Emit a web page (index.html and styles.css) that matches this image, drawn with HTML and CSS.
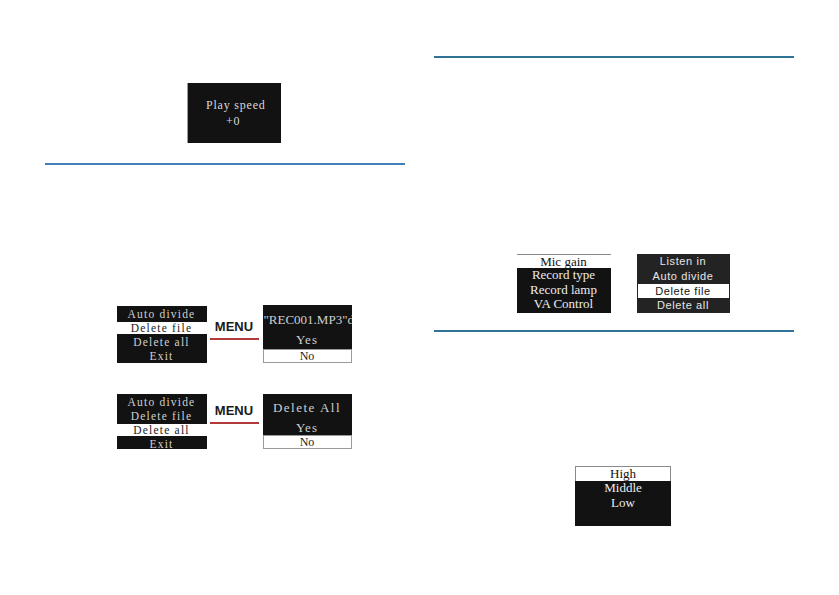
FILE: index.html
```html
<!DOCTYPE html>
<html lang="en">
  <head>
    <meta charset="UTF-8" />
    <meta name="viewport" content="width=device-width, initial-scale=1.0" />
    <title>Recorder Menus</title>
    <link rel="stylesheet" href="styles.css">
  </head>
  <body>
    <main class="page">
      <section class="column column-left">
        <div class="figure fig-speed">
          <div class="screen speed-screen">
            <p>Play speed</p>
            <p class="speed-value">+0</p>
          </div>
        </div>

        <hr class="rule rule-left" />

        <div class="figure fig-menu fig-delete-file">
          <ul class="screen lcd-list">
            <li>Auto divide</li>
            <li class="selected">Delete file</li>
            <li>Delete all</li>
            <li>Exit</li>
          </ul>
          <div class="arrow">
            <span class="arrow-label">MENU</span>
            <span class="arrow-line"></span>
          </div>
          <div class="screen confirm">
            <p class="confirm-title filename">"REC001.MP3"d</p>
            <p class="confirm-yes">Yes</p>
            <p class="confirm-no">No</p>
          </div>
        </div>

        <div class="figure fig-menu fig-delete-all">
          <ul class="screen lcd-list">
            <li>Auto divide</li>
            <li>Delete file</li>
            <li class="selected">Delete all</li>
            <li>Exit</li>
          </ul>
          <div class="arrow">
            <span class="arrow-label">MENU</span>
            <span class="arrow-line"></span>
          </div>
          <div class="screen confirm">
            <p class="confirm-title">Delete All</p>
            <p class="confirm-yes">Yes</p>
            <p class="confirm-no">No</p>
          </div>
        </div>
      </section>

      <section class="column column-right">
        <hr class="rule rule-right" />

        <div class="figure fig-pair">
          <ul class="screen serif-list">
            <li class="selected">Mic gain</li>
            <li>Record type</li>
            <li>Record lamp</li>
            <li>VA Control</li>
          </ul>
          <ul class="screen sans-list">
            <li>Listen in</li>
            <li>Auto divide</li>
            <li class="selected">Delete file</li>
            <li>Delete all</li>
          </ul>
        </div>

        <hr class="rule rule-right rule-second" />

        <div class="figure fig-level">
          <ul class="screen serif-list level-list">
            <li class="selected">High</li>
            <li>Middle</li>
            <li>Low</li>
          </ul>
        </div>
      </section>
    </main>
  </body>
</html>
```

FILE: styles.css
```css
* {
  margin: 0px;
  padding: 0px;
  box-sizing: border-box;
}
body {
  background-color: #ffffff;
  font-family: "Liberation Sans", Arial, sans-serif;
}
ul {
  list-style: none;
}

.page {
  display: flex;
  gap: 29px;
  padding-left: 45px;
}

.column {
  width: 360px;
  display: flex;
  flex-direction: column;
}
.column-left {
  padding-top: 83px;
}
.column-right {
  padding-top: 56px;
}

.figure {
  display: flex;
  justify-content: center;
  align-items: flex-start;
  padding-left: 18px;
}

.rule {
  border: none;
  height: 2px;
}
.rule-left {
  margin-top: 20px;
  background-color: #3f80b8;
}
.rule-right {
  background-color: #2f7497;
}

/* dark lcd screens */
.screen {
  background-color: #121212;
  color: #d8d8d8;
}

.speed-screen {
  width: 94px;
  height: 60px;
  border-left: 1px solid #9a9a9a;
  padding-top: 14px;
  font-family: "Liberation Serif", serif;
  font-size: 12px;
  letter-spacing: 0.8px;
}
.speed-screen p {
  line-height: 16px;
  padding-left: 18px;
}
.speed-screen .speed-value {
  padding-left: 38px;
}

/* delete figures */
.fig-delete-file {
  margin-top: 140px;
}
.fig-delete-all {
  margin-top: 31px;
}

.lcd-list {
  width: 90px;
  height: 57px;
  padding-top: 1px;
  font-family: "Liberation Serif", serif;
  font-size: 11.5px;
  letter-spacing: 1.2px;
  text-align: center;
  color: #cfcfcf;
}
.fig-delete-file .lcd-list {
  margin-top: 1px;
}
.fig-delete-all .lcd-list {
  height: 55px;
}
.lcd-list li {
  height: 14px;
  line-height: 14px;
}
.lcd-list li.selected {
  background-color: #ffffff;
  color: #1a1a1a;
  height: 12px;
  line-height: 12px;
  margin: 1px 0;
}

.arrow {
  width: 49px;
  margin: 0 4px 0 3px;
  display: flex;
  flex-direction: column;
  align-items: center;
  padding-top: 14px;
}
.fig-delete-all .arrow {
  padding-top: 9px;
}
.arrow-label {
  font-weight: bold;
  font-size: 13px;
  line-height: 16px;
  color: #1a1a1a;
}
.arrow-line {
  width: 49px;
  height: 2px;
  margin-top: 3px;
  background-color: #b23a3a;
}

.confirm {
  width: 89px;
  height: 58px;
  overflow: hidden;
  font-family: "Liberation Serif", serif;
  font-size: 13px;
  color: #d0d0d0;
  display: flex;
  flex-direction: column;
}
.fig-delete-all .confirm {
  height: 55px;
}
.confirm-title {
  white-space: nowrap;
  letter-spacing: 0.5px;
  line-height: 16px;
  margin-top: 7px;
  flex-shrink: 0;
}
.confirm-title.filename {
  margin-left: 1px;
  letter-spacing: 0;
}
.fig-delete-all .confirm-title {
  margin-top: 6px;
  text-align: center;
  letter-spacing: 1.5px;
}
.confirm-yes {
  text-align: center;
  line-height: 14px;
  margin-top: 5px;
  letter-spacing: 1px;
  flex-shrink: 0;
}
.fig-delete-all .confirm-yes {
  margin-top: 6px;
  line-height: 12px;
}
.confirm-no {
  margin-top: auto;
  background-color: #ffffff;
  color: #1a1a1a;
  border: 1px solid #9a9a9a;
  text-align: center;
  font-size: 12px;
  line-height: 12px;
  height: 14px;
  flex-shrink: 0;
}

/* right column figures */
.fig-pair {
  margin-top: 196px;
  gap: 26px;
}
.serif-list {
  width: 94px;
  height: 59px;
  font-family: "Liberation Serif", serif;
  font-size: 13px;
  text-align: center;
  color: #ececec;
}
.serif-list li {
  height: 14px;
  line-height: 14px;
}
.serif-list li + li {
  height: 14.5px;
}
.serif-list li.selected {
  background-color: #ffffff;
  color: #111111;
  border-top: 1px solid #8a8a8a;
  line-height: 13px;
}

.sans-list {
  width: 93px;
  height: 59px;
  background-color: #232323;
  font-size: 11px;
  letter-spacing: 0.6px;
  text-align: center;
  color: #e6e6e6;
}
.sans-list li {
  height: 14.75px;
  line-height: 15px;
}
.sans-list li.selected {
  background-color: #ffffff;
  color: #111111;
  margin: 0 1px;
}

.rule-second {
  margin-top: 17px;
}

.fig-level {
  margin-top: 134px;
}
.level-list {
  width: 96px;
  height: 60px;
}
.level-list li.selected {
  height: 15px;
  line-height: 14px;
  border: 1px solid #8a8a8a;
  border-bottom: none;
}
```
